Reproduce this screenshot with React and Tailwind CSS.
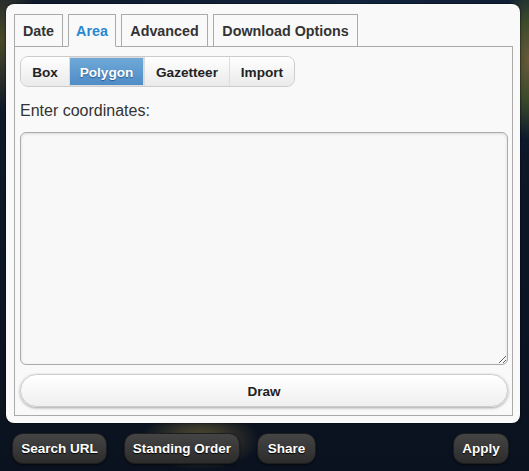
import React, { useState } from "react";

const tabs = [
  { label: "Date", w: "w-[49px]" },
  { label: "Area", w: "w-[48px]" },
  { label: "Advanced", w: "w-[87px]" },
  { label: "Download Options", w: "w-[145px]" },
];

const modes = [
  { label: "Box", w: "w-[48px]" },
  { label: "Polygon", w: "w-[75px]" },
  { label: "Gazetteer", w: "w-[85px]" },
  { label: "Import", w: "w-[65px]" },
];

const DarkButton = ({ children, width }) => (
  <button
    className={`h-[31px] ${width} pt-[2px] rounded-[11px] border border-[#1e1e1e] bg-gradient-to-b from-[#454545] to-[#2c2c2c] text-[13.5px] font-bold text-white [text-shadow:0_1px_1px_#000] shadow-[0_1px_2px_rgba(0,0,0,0.6)]`}
  >
    {children}
  </button>
);

export default function App() {
  const [activeTab, setActiveTab] = useState("Area");
  const [mode, setMode] = useState("Polygon");

  return (
    <div className="w-[529px] h-[471px] overflow-hidden font-['Liberation_Sans',Arial,sans-serif] bg-[#0a1322] bg-[radial-gradient(ellipse_40px_70px_at_0px_40px,#4a4a2a_0%,transparent_100%),radial-gradient(ellipse_30px_80px_at_529px_60px,#6a5a3a_0%,#3a4a2a_50%,transparent_100%),radial-gradient(ellipse_60px_30px_at_200px_440px,#5a5233_0%,transparent_100%),radial-gradient(ellipse_300px_200px_at_350px_0px,#12243f_0%,transparent_100%),linear-gradient(180deg,#0f1a2c,#0a121f)]">
      {/* Main panel */}
      <div className="ml-[6px] mt-[4px] w-[514px] h-[419px] rounded-[8px] bg-[#f9f9f9] pl-[8px] pt-[10px] shadow-[0_0_2px_#000]">
        {/* Tabs */}
        <div className="flex gap-[5px] h-[32px]">
          {tabs.map((t) => (
            <button
              key={t.label}
              onClick={() => setActiveTab(t.label)}
              className={`${t.w} h-[33px] pt-[3px] border border-[#aaa] text-[14.3px] font-bold ${
                activeTab === t.label
                  ? "border-b-[#f9f9f9] bg-[#f9f9f9] text-[#2a88d0] relative z-10"
                  : "bg-[#f9f9f9] text-[#333]"
              }`}
            >
              {t.label}
            </button>
          ))}
        </div>

        {/* Content box */}
        <div className="w-[499px] h-[370px] border border-[#aaa] px-[5px] pt-[9px]">
          {/* Segmented control */}
          <div className="flex h-[31px] w-fit rounded-[8px] border border-[#ccc] overflow-hidden">
            {modes.map((m, i) => (
              <button
                key={m.label}
                onClick={() => setMode(m.label)}
                className={`${m.w} h-full pt-[3px] text-[13.6px] font-bold ${i > 0 ? "border-l border-[#ddd]" : ""} ${
                  mode === m.label
                    ? "bg-gradient-to-b from-[#6fa9d8] to-[#4f8cc6] text-white [text-shadow:0_1px_1px_#2a5a8a] border border-[#2b6fb0]"
                    : "bg-gradient-to-b from-[#ffffff] to-[#eaeaea] text-[#222]"
                }`}
              >
                {m.label}
              </button>
            ))}
          </div>

          <p className="mt-[15px] text-[16px] leading-[18px] text-[#333]">
            Enter coordinates:
          </p>

          <textarea className="mt-[12px] block w-[488px] h-[233px] rounded-[6px] border border-[#aaa] bg-[#f8f8f8] shadow-[inset_0_1px_3px_rgba(0,0,0,0.12)] outline-none" />

          <button className="mt-[9px] w-[488px] h-[33px] pt-[3px] rounded-full border border-[#ccc] bg-gradient-to-b from-[#ffffff] to-[#f0f0f0] text-[13.5px] font-bold text-[#222] shadow-[0_1px_3px_rgba(0,0,0,0.35)]">
            Draw
          </button>
        </div>
      </div>

      {/* Bottom toolbar */}
      <div className="flex items-center mt-[10px] pl-[12px] pr-[20px]">
        <div className="flex gap-[17px]">
          <DarkButton width="w-[95px]">Search URL</DarkButton>
          <DarkButton width="w-[116px]">Standing Order</DarkButton>
          <DarkButton width="w-[59px]">Share</DarkButton>
        </div>
        <div className="ml-auto">
          <DarkButton width="w-[56px]">Apply</DarkButton>
        </div>
      </div>
    </div>
  );
}
